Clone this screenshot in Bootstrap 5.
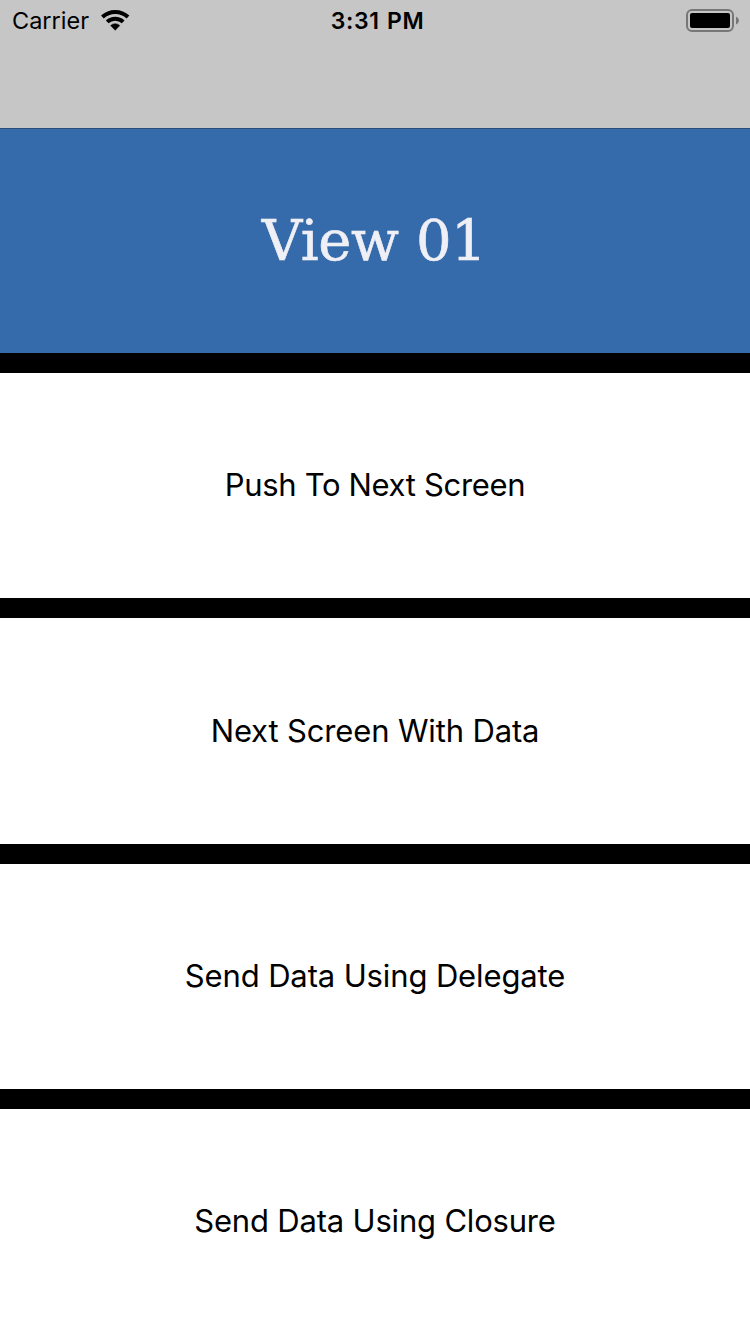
<!DOCTYPE html>
<html lang="en">
<head>
<meta charset="utf-8">
<meta name="viewport" content="width=device-width, initial-scale=1">
<title>View 01</title>
<link href="https://cdn.jsdelivr.net/npm/bootstrap@5.3.0/dist/css/bootstrap.min.css" rel="stylesheet">
<style>
body { font-family: Inter, "Liberation Sans", sans-serif; color: #000; background: #000; }
.top-area { height: 128px; background: #c6c6c6; }
.status-row { height: 42px; line-height: 42px; }
.status-row .side { width: 250px; }
.carrier { font-size: 23.5px; padding-left: 12px; }
.wifi { margin-left: 9px; }
.clock { font-size: 23px; font-weight: 600; letter-spacing: .65px; word-spacing: 1px; padding-left: 5px; }
.stack { gap: 20px; }
.tile { flex: 1 1 0; min-height: 0; font-size: 31px; line-height: 38px; background: #fff; border: 0; border-radius: 0; color: #000; }
.hero { background: #356aab; color: #efeff6; box-shadow: inset 0 1px #2a4c75; font-family: "DejaVu Serif", serif; font-size: 56px; line-height: 66px; }
.hero h1 { font-size: inherit; font-weight: 400; line-height: inherit; letter-spacing: -.4px; padding-right: 2px; -webkit-text-stroke: .6px #efeff6; }
.t1 { letter-spacing: -.33px; padding-bottom: 2px; }
.t2 { letter-spacing: -.15px; }
.t3 { letter-spacing: -.13px; }
.t4 { letter-spacing: -.19px; }
</style>
</head>
<body class="vh-100 d-flex flex-column overflow-hidden">
<header class="top-area flex-shrink-0">
  <div class="status-row d-flex align-items-center justify-content-between">
    <div class="side d-flex align-items-center">
      <span class="carrier">Carrier</span>
      <svg class="wifi" width="34" height="24" viewBox="98 9 34 24" fill="none" stroke="#000">
        <path d="M102.4 17A18.6 18.6 0 0 1 128 17" stroke-width="4"/>
        <path d="M107.2 21.9A11.6 11.6 0 0 1 123.2 21.9" stroke-width="3.9"/>
        <path d="M115.2 30.3L110.6 25.6A6.4 6.4 0 0 1 119.8 25.6Z" fill="#000" stroke="#000" stroke-width=".5"/>
      </svg>
    </div>
    <span class="clock">3:31 PM</span>
    <div class="side d-flex align-items-center justify-content-end">
      <svg width="64" height="24" viewBox="686 9 64 24">
        <rect x="687" y="10" width="46" height="21" rx="5" fill="none" stroke="#777" stroke-width="2"/>
        <rect x="690" y="13" width="40" height="15" rx="2"/>
        <path d="M736 16.5Q739 17.8 739 20.5T736 24.5Z" fill="#777"/>
      </svg>
    </div>
  </div>
</header>
<main class="stack flex-grow-1 d-flex flex-column">
  <section class="tile hero d-flex align-items-center justify-content-center"><h1 class="m-0">View 01</h1></section>
  <button class="tile btn p-0" type="button"><span class="t1 d-block">Push To Next Screen</span></button>
  <button class="tile btn p-0" type="button"><span class="t2">Next Screen With Data</span></button>
  <button class="tile btn p-0" type="button"><span class="t3">Send Data Using Delegate</span></button>
  <button class="tile btn p-0" type="button"><span class="t4">Send Data Using Closure</span></button>
</main>
<script src="https://cdn.jsdelivr.net/npm/bootstrap@5.3.0/dist/js/bootstrap.bundle.min.js"></script>
</body>
</html>
